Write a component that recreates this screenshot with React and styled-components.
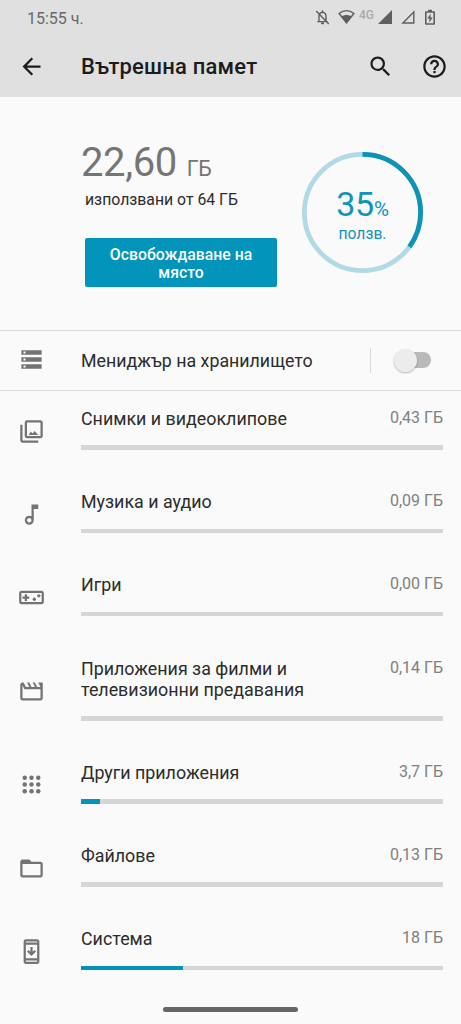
import React from "react";
import styled, { createGlobalStyle } from "styled-components";

const GlobalStyle = createGlobalStyle`
  *, *::before, *::after { box-sizing: border-box; }
  body { margin: 0; background: #fafafa; font-family: Roboto, "Noto Sans", sans-serif; color: #2c2c2c; }
`;

const Screen = styled.main`
  display: flex;
  flex-direction: column;
  width: 461px;
  height: 1024px;
  overflow: hidden;
  background: #fafafa;
`;

const Header = styled.header`
  flex: none;
  height: 97px;
  background: #e0e0e0;
`;

const StatusBar = styled.div`
  display: flex;
  align-items: flex-start;
  height: 35px;
  padding: 9px 26px 0 27px;
  color: #5f5f5f;
`;

const Clock = styled.time`
  flex: 1;
  font-size: 16px;
  line-height: 19px;
  color: #686868;
`;

const StatusIcon = styled.svg`
  flex: none;
  display: block;
  height: 16px;
  width: ${(p) => p.$w}px;
  margin-left: ${(p) => p.$gap || 0}px;
`;

const Network = styled.span`
  width: 18px;
  margin-left: 4px;
  font-size: 12px;
  line-height: 12px;
  font-weight: 500;
  color: #ababab;
`;

const Toolbar = styled.div`
  display: flex;
  align-items: center;
  height: 62px;
  padding: 0 13.5px 0 18px;
  color: #1c1c1c;
`;

const Title = styled.h1`
  flex: 1;
  margin: 2px 0 0 36px;
  font-size: 22px;
  line-height: 28px;
  font-weight: 500;
  letter-spacing: 0.2px;
`;

const IconButton = styled.button`
  display: flex;
  padding: 0;
  margin: 0 0 0 ${(p) => p.$gap || 0}px;
  border: 0;
  background: none;
  color: inherit;
`;

const Glyph = styled.svg`
  display: block;
  width: 27px;
  height: 27px;
  fill: currentColor;
`;

const Summary = styled.section`
  flex: none;
  display: flex;
  justify-content: space-between;
  height: 233px;
  padding: 0 38px 0 81px;
`;

const Usage = styled.div`
  display: flex;
  flex-direction: column;
  align-items: flex-start;
  padding-top: 42px;
`;

const Amount = styled.div`
  font-size: 40px;
  line-height: 48px;
  letter-spacing: -0.4px;
  color: #757575;
  white-space: nowrap;
`;

const Unit = styled.span`
  margin-left: 10px;
  font-size: 21.5px;
`;

const Total = styled.div`
  margin: -3px 0 0 4px;
  font-size: 15.8px;
  line-height: 20px;
  white-space: nowrap;
`;

const FreeButton = styled.button`
  width: 192px;
  height: 49px;
  margin: 28px 0 0 4px;
  padding: 3px 12px 0 12px;
  border: 0;
  border-radius: 2px;
  background: #0394bc;
  color: #fafafa;
  font: 500 15.8px/18px Roboto, "Noto Sans", sans-serif;
`;

const Gauge = styled.div`
  display: grid;
  place-items: center;
  width: 121px;
  height: 121px;
  margin-top: 55px;
  > * { grid-area: 1 / 1; }
`;

const Ring = styled.svg`
  display: block;
  width: 121px;
  height: 121px;
`;

const GaugeLabel = styled.div`
  display: flex;
  flex-direction: column;
  align-items: center;
  padding-top: 7px;
  color: #1094b8;
`;

const Percent = styled.div`
  font-size: 34px;
  line-height: 30px;
  letter-spacing: -0.2px;
`;

const PercentSign = styled.span`
  font-size: 20.5px;
`;

const GaugeCaption = styled.div`
  font-size: 15.7px;
  line-height: 20px;
`;

const ManagerRow = styled.section`
  flex: none;
  display: flex;
  align-items: center;
  height: 61px;
  padding: 0 29px 0 18px;
  border: solid #dadada;
  border-width: 1px 0;
`;

const ManagerIcon = styled.span`
  display: flex;
  margin-top: -2px;
  color: #737373;
`;

const ManagerLabel = styled.div`
  flex: 1;
  margin-left: 36px;
  font-size: 17.8px;
  line-height: 21px;
`;

const Separator = styled.div`
  width: 1px;
  height: 25px;
  margin-right: 23px;
  background: #dadada;
`;

const Switch = styled.button`
  display: flex;
  align-items: center;
  width: 38px;
  height: 26px;
  margin-top: -1px;
  padding: 0;
  border: 0;
  background: none;
`;

const Track = styled.span`
  display: flex;
  align-items: center;
  width: 34px;
  height: 16px;
  margin-left: 3px;
  border-radius: 8px;
  background: #b9b9b9;
`;

const Thumb = styled.span`
  flex: none;
  width: 23px;
  height: 23px;
  margin-left: -3px;
  border-radius: 50%;
  background: #ececec;
  box-shadow: 0 1px 2px rgba(0, 0, 0, 0.28);
`;

const Categories = styled.ul`
  margin: 0;
  padding: 0;
  list-style: none;
`;

const Category = styled.li`
  display: flex;
  align-items: center;
  height: ${(p) => (p.$tall ? 104.3 : 83.2)}px;
  padding: 0 18px 3px;
  color: #737373;
`;

const Details = styled.div`
  flex: 1;
  margin: 0 0 4.2px 36px;
`;

const Line = styled.div`
  display: flex;
  justify-content: space-between;
  align-items: flex-start;
`;

const Name = styled.div`
  font-size: 17.85px;
  line-height: 21.3px;
  color: #2c2c2c;
  white-space: pre-line;
`;

const Size = styled.div`
  font-size: 16px;
  line-height: 20px;
  color: #808080;
`;

const Bar = styled.div`
  height: 4.5px;
  margin-top: 16px;
  background: #d6d6d6;
`;

const Fill = styled.div`
  height: 100%;
  background: #0394bc;
`;

const Footer = styled.footer`
  display: flex;
  justify-content: center;
  margin-top: auto;
  padding-bottom: 12px;
`;

const HomeHandle = styled.div`
  width: 135px;
  height: 5px;
  border-radius: 3px;
  background: #666;
`;

function Icon({ d, children }) {
  return (
    <Glyph viewBox="0 0 24 24" aria-hidden="true">
      {d && <path d={d} />}
      {children}
    </Glyph>
  );
}

const BACK = "M20 11H7.83l5.59-5.59L12 4l-8 8 8 8 1.41-1.41L7.83 13H20v-2z";
const SEARCH = "M15.5 14h-.79l-.28-.27A6.471 6.471 0 0 0 16 9.5 6.5 6.5 0 1 0 9.5 16c1.61 0 3.09-.59 4.23-1.57l.27.28v.79l5 4.99L20.49 19l-4.99-5zm-6 0C7.01 14 5 11.99 5 9.5S7.01 5 9.5 5 14 7.01 14 9.5 11.99 14 9.5 14z";
const HELP = "M11 18h2v-2h-2v2zm1-16C6.48 2 2 6.48 2 12s4.48 10 10 10 10-4.48 10-10S17.52 2 12 2zm0 18c-4.41 0-8-3.59-8-8s3.59-8 8-8 8 3.59 8 8-3.59 8-8 8zm0-14c-2.21 0-4 1.79-4 4h2c0-1.1.9-2 2-2s2 .9 2 2c0 2-3 1.75-3 5h2c0-2.25 3-2.5 3-5 0-2.21-1.79-4-4-4z";
const STORAGE = "M3 3.8h18v4H3zm0 6.2h18v4H3zm0 6.2h18v4H3zM4.9 4.9v1.8h1.8V4.9zm0 6.2v1.8h1.8v-1.8zm0 6.2v1.8h1.8v-1.8z";
const PHOTOS = "M20 4v12H8V4h12m0-2H8c-1.1 0-2 .9-2 2v12c0 1.1.9 2 2 2h12c1.1 0 2-.9 2-2V4c0-1.1-.9-2-2-2zm-8.6 9.9l1.5 1.8 1.9-2.2L18 15H9.6zM2 6v14c0 1.1.9 2 2 2h14v-2H4V6H2z";
const MUSIC = "M12 3v10.55c-.59-.34-1.27-.55-2-.55-2.21 0-4 1.79-4 4s1.79 4 4 4 4-1.79 4-4V7h4V3h-6zm-2 16c-1.1 0-2-.9-2-2s.9-2 2-2 2 .9 2 2-.9 2-2 2z";
const GAMES = "M21 6H3c-1.1 0-2 .9-2 2v8c0 1.1.9 2 2 2h18c1.1 0 2-.9 2-2V8c0-1.1-.9-2-2-2zm0 10H3V8h18v8zM6 15h2v-2h2v-2H8V9H6v2H4v2h2z";
const MOVIES = "M4 6.47L5.76 10H20v8H4V6.47M22 4h-4l2 4h-3l-2-4h-2l2 4h-3l-2-4H8l2 4H7L5 4H4c-1.1 0-1.99.9-1.99 2L2 18c0 1.1.9 2 2 2h16c1.1 0 2-.9 2-2V4z";
const FOLDER = "M20 6h-8l-2-2H4c-1.1 0-1.99.9-1.99 2L2 18c0 1.1.9 2 2 2h16c1.1 0 2-.9 2-2V8c0-1.1-.9-2-2-2zm0 12H4V8h16v10z";
const SYSTEM = "M17 1.01L7 1c-1.1 0-2 .9-2 2v18c0 1.1.9 2 2 2h10c1.1 0 2-.9 2-2V3c0-1.1-.9-1.99-2-1.99zM17 21H7v-1h10v1zm0-3H7V6h10v12zm0-14H7V3h10v1zM16 12l-4 4-4-4 1.41-1.41L11 12.17V8h2v4.17l1.59-1.59L16 12z";

const categories = [
  { name: "Снимки и видеоклипове", size: "0,43 ГБ", used: 0, icon: <Icon d={PHOTOS} /> },
  { name: "Музика и аудио", size: "0,09 ГБ", used: 0, icon: <Icon d={MUSIC} /> },
  {
    name: "Игри", size: "0,00 ГБ", used: 0,
    icon: <Icon d={GAMES}><circle cx="14.5" cy="13.5" r="1.5" /><circle cx="18.5" cy="10.5" r="1.5" /></Icon>,
  },
  { name: "Приложения за филми и\nтелевизионни предавания", size: "0,14 ГБ", used: 0, tall: true, icon: <Icon d={MOVIES} /> },
  {
    name: "Други приложения", size: "3,7 ГБ", used: 5.2,
    icon: (
      <Icon>
        {[6, 12, 18].map((y) => [6, 12, 18].map((x) => <circle key={`${x}-${y}`} cx={x} cy={y} r="2" />))}
      </Icon>
    ),
  },
  { name: "Файлове", size: "0,13 ГБ", used: 0, icon: <Icon d={FOLDER} /> },
  { name: "Система", size: "18 ГБ", used: 28.1, icon: <Icon d={SYSTEM} /> },
];

const RADIUS = 58.1;
const LENGTH = 2 * Math.PI * RADIUS;

export default function App() {
  return (
    <Screen>
      <GlobalStyle />
      <Header>
        <StatusBar>
          <Clock>15:55 ч.</Clock>
          <StatusIcon $w={15} viewBox="0 0 15 16" fill="none" stroke="currentColor" strokeWidth="1.4">
            <path d="M4 12.4V7.2C4 5 5.3 3.6 7.5 3.3 9.7 3.6 11 5 11 7.2v5.2M2.3 12.6h10.4M7.5 3.3V1.3M1.2 2l12.6 13" />
            <path d="M6 14.3h3" strokeWidth="1.8" />
          </StatusIcon>
          <StatusIcon $w={17} $gap={8} viewBox="0 0 17 16">
            <path d="M1.1 4.5C5.5.7 11.5.7 15.9 4.5L8.5 13.8z" fill="none" stroke="currentColor" strokeWidth="1.4" />
            <path d="M3.6 7.6c2.8-2 7-2 9.8 0l-4.9 6.6z" fill="currentColor" />
          </StatusIcon>
          <Network>4G</Network>
          <StatusIcon $w={14} $gap={1} viewBox="0 0 14 16">
            <path d="M14 1v14H0z" fill="currentColor" />
          </StatusIcon>
          <StatusIcon $w={14} $gap={9} viewBox="0 0 14 16">
            <path d="M12.8 3v11H1.9z" fill="none" stroke="currentColor" strokeWidth="1.4" />
          </StatusIcon>
          <StatusIcon $w={10} $gap={10} viewBox="0 0 10 16">
            <path d="M.8 3h8.4v12H.8z" fill="none" stroke="currentColor" strokeWidth="1.6" strokeLinejoin="round" />
            <path d="M3 .8h4V3H3zM5.6 4.7 2.3 9.5h2.1v3.9l3.3-4.9H5.6z" fill="currentColor" />
          </StatusIcon>
        </StatusBar>
        <Toolbar>
          <IconButton aria-label="Назад"><Icon d={BACK} /></IconButton>
          <Title>Вътрешна памет</Title>
          <IconButton aria-label="Търсене"><Icon d={SEARCH} /></IconButton>
          <IconButton aria-label="Помощ" $gap={27}><Icon d={HELP} /></IconButton>
        </Toolbar>
      </Header>

      <Summary>
        <Usage>
          <Amount>22,60<Unit>ГБ</Unit></Amount>
          <Total>използвани от 64 ГБ</Total>
          <FreeButton>Освобождаване на място</FreeButton>
        </Usage>
        <Gauge>
          <Ring viewBox="0 0 121 121" fill="none" strokeWidth="4.8">
            <circle cx="60.5" cy="60.5" r={RADIUS} stroke="#b1dae6" />
            <circle
              cx="60.5" cy="60.5" r={RADIUS} stroke="#0b93b8"
              strokeDasharray={`${LENGTH * 0.35} ${LENGTH}`}
              transform="rotate(-90 60.5 60.5)"
            />
          </Ring>
          <GaugeLabel>
            <Percent>35<PercentSign>%</PercentSign></Percent>
            <GaugeCaption>ползв.</GaugeCaption>
          </GaugeLabel>
        </Gauge>
      </Summary>

      <ManagerRow>
        <ManagerIcon><Icon d={STORAGE} /></ManagerIcon>
        <ManagerLabel>Мениджър на хранилището</ManagerLabel>
        <Separator />
        <Switch role="switch" aria-checked="false" aria-label="Мениджър на хранилището">
          <Track><Thumb /></Track>
        </Switch>
      </ManagerRow>

      <Categories>
        {categories.map((c) => (
          <Category key={c.name} $tall={c.tall}>
            {c.icon}
            <Details>
              <Line>
                <Name>{c.name}</Name>
                <Size>{c.size}</Size>
              </Line>
              <Bar><Fill style={{ width: `${c.used}%` }} /></Bar>
            </Details>
          </Category>
        ))}
      </Categories>

      <Footer><HomeHandle /></Footer>
    </Screen>
  );
}
